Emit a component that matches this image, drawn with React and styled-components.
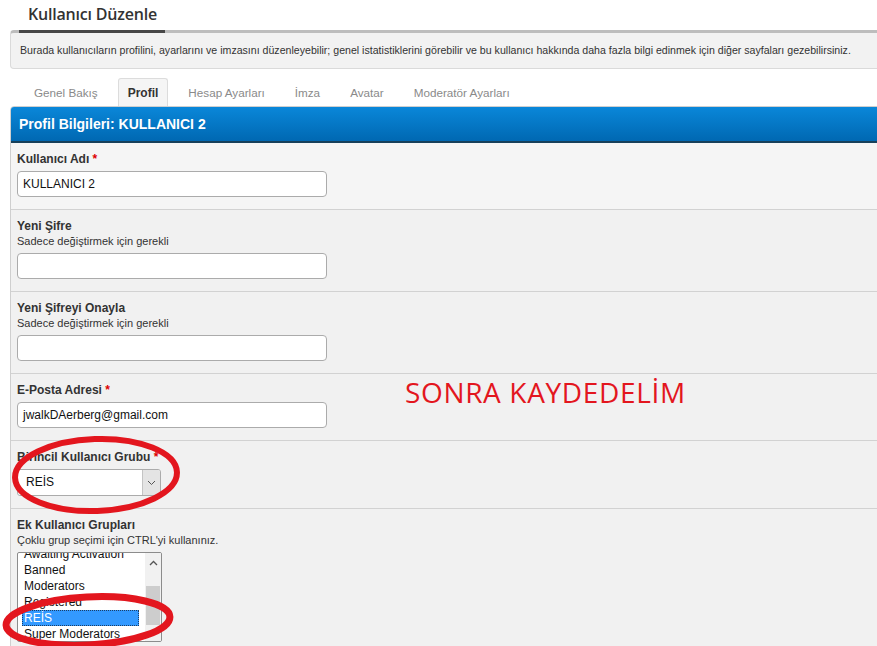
import React from 'react';
import styled, { createGlobalStyle } from 'styled-components';

const GlobalStyle = createGlobalStyle`
  body {
    margin: 0;
    background: #fff;
    font-family: "Liberation Sans", Arial, sans-serif;
    color: #333;
    overflow: hidden;
  }
`;

const Page = styled.div`
  position: relative;
  width: 877px;
  height: 646px;
  overflow: hidden;
`;

const Content = styled.div`
  width: 900px;
  padding-left: 10px;
`;

const Title = styled.h1`
  margin: 0;
  height: 30px;
  padding-left: 18px;
  font-family: "Open Sans", "Liberation Sans", sans-serif;
  font-weight: 600;
  font-size: 16px;
  letter-spacing: -0.2px;
  line-height: 28px;
  color: #333;
`;

const InfoBox = styled.div`
  position: relative;
  height: 35px;
  padding: 0 9px;
  background: #f2f2f2;
  border: 1px solid #dadada;
  border-top: 3px solid #bdbdbd;
  border-radius: 4px;
  font-size: 10.6px;
  line-height: 35px;
  white-space: nowrap;

  &::before {
    content: '';
    position: absolute;
    top: -3px;
    left: 8px;
    width: 146px;
    height: 3px;
    background: #474747;
  }
`;

const Tabs = styled.div`
  display: flex;
  gap: 10px;
  margin-top: 9px;
  padding-left: 14px;
`;

const Tab = styled.div`
  height: 27px;
  padding: 0 9px;
  border: 1px solid ${p => (p.$active ? '#dcdcdc' : 'transparent')};
  border-bottom: none;
  border-radius: 3px 3px 0 0;
  background: ${p => (p.$active ? '#f5f5f5' : 'transparent')};
  font-size: ${p => (p.$active ? '12px' : '11.7px')};
  font-weight: ${p => (p.$active ? 'bold' : 'normal')};
  color: ${p => (p.$active ? '#333' : '#8a8a8a')};
  line-height: 28px;
`;

const Panel = styled.div`
  border: 1px solid #cfcfcf;
  border-radius: 4px 0 0 0;
  background: #f4f4f4;
  overflow: hidden;
`;

const PanelHeader = styled.div`
  height: 34px;
  padding-left: 8px;
  background: linear-gradient(#0a87d9, #0068b2);
  border-bottom: 2px solid #17405a;
  color: #fff;
  font-weight: bold;
  font-size: 14px;
  line-height: 35px;
`;

const Row = styled.div`
  padding: 8px 6px 12px 6px;
  background: ${p => (p.$light ? '#f5f5f5' : '#f1f1f1')};
  & + & {
    border-top: 1px solid #d2d2d2;
  }
`;

const Label = styled.div`
  font-weight: bold;
  font-size: 12px;
  line-height: 16px;
  color: #333;
`;

const Required = styled.span`
  color: #d00;
`;

const Hint = styled.div`
  font-size: 11px;
  line-height: 15px;
  color: #333;
`;

const TextInput = styled.div`
  box-sizing: border-box;
  width: 310px;
  height: 26px;
  margin-top: 4px;
  padding: 0 5px;
  background: #fff;
  border: 1px solid #ababab;
  border-radius: 4px;
  font-size: 12px;
  line-height: 24px;
  color: #111;
`;

const Select = styled.div`
  box-sizing: border-box;
  display: flex;
  width: 144px;
  height: 27px;
  margin-top: 4px;
  background: #fff;
  border: 1px solid #ababab;
  border-radius: 3px;
  overflow: hidden;
`;

const SelectValue = styled.div`
  flex: 1;
  padding-left: 8px;
  font-size: 12px;
  line-height: 25px;
  color: #111;
`;

const SelectArrow = styled.div`
  display: flex;
  align-items: center;
  justify-content: center;
  width: 17px;
  background: #e4e4e4;
  border-left: 1px solid #c4c4c4;
`;

const ListBox = styled.div`
  box-sizing: border-box;
  display: flex;
  width: 145px;
  height: 90px;
  margin-top: 4px;
  background: #fff;
  border: 1px solid #8c8c8c;
  border-radius: 2px;
  overflow: hidden;
`;

const Options = styled.div`
  flex: 1;
  padding: 0 6px 0 4px;
  margin-top: -7px;
`;

const Option = styled.div`
  box-sizing: border-box;
  height: 16px;
  padding-left: 2px;
  font-size: 12px;
  line-height: 16px;
  white-space: nowrap;
  color: ${p => (p.$selected ? '#fff' : '#111')};
  background: ${p => (p.$selected ? '#3399ff' : 'transparent')};
  outline: ${p => (p.$selected ? '1px dotted #1a3d66' : 'none')};
  outline-offset: -1px;
`;

const ScrollBar = styled.div`
  display: flex;
  flex-direction: column;
  width: 16px;
  background: #f1f1f1;
`;

const ScrollButton = styled.div`
  display: flex;
  align-items: center;
  justify-content: center;
  height: 20px;
`;

const ScrollThumb = styled.div`
  height: 39px;
  margin: 13px 1px 0 1px;
  background: #cdcdcd;
`;

const Annotation = styled.div`
  position: absolute;
  left: 405px;
  top: 375px;
  font-family: "Open Sans", "Liberation Sans", sans-serif;
  font-size: 28px;
  line-height: 34px;
  color: #e3161e;
  letter-spacing: 0.65px;
`;

const Marks = styled.svg`
  position: absolute;
  left: 0;
  top: 0;
  pointer-events: none;
`;

const tabs = ['Genel Bakış', 'Profil', 'Hesap Ayarları', 'İmza', 'Avatar', 'Moderatör Ayarları'];
const groups = ['Awaiting Activation', 'Banned', 'Moderators', 'Registered', 'REİS', 'Super Moderators'];

export default function App() {
  return (
    <Page>
      <GlobalStyle />
      <Content>
        <Title>Kullanıcı Düzenle</Title>
        <InfoBox>
          Burada kullanıcıların profilini, ayarlarını ve imzasını düzenleyebilir; genel istatistiklerini görebilir ve bu kullanıcı hakkında daha fazla bilgi edinmek için diğer sayfaları gezebilirsiniz.
        </InfoBox>
        <Tabs>
          {tabs.map(t => (
            <Tab key={t} $active={t === 'Profil'}>{t}</Tab>
          ))}
        </Tabs>
        <Panel>
          <PanelHeader>Profil Bilgileri: KULLANICI 2</PanelHeader>
          <Row $light>
            <Label>Kullanıcı Adı <Required>*</Required></Label>
            <TextInput>KULLANICI 2</TextInput>
          </Row>
          <Row>
            <Label>Yeni Şifre</Label>
            <Hint>Sadece değiştirmek için gerekli</Hint>
            <TextInput />
          </Row>
          <Row>
            <Label>Yeni Şifreyi Onayla</Label>
            <Hint>Sadece değiştirmek için gerekli</Hint>
            <TextInput />
          </Row>
          <Row>
            <Label>E-Posta Adresi <Required>*</Required></Label>
            <TextInput>jwalkDAerberg@gmail.com</TextInput>
          </Row>
          <Row>
            <Label>Birincil Kullanıcı Grubu <Required>*</Required></Label>
            <Select>
              <SelectValue>REİS</SelectValue>
              <SelectArrow>
                <svg width="9" height="6" viewBox="0 0 9 6">
                  <polyline points="1,1 4.5,4.5 8,1" fill="none" stroke="#555" strokeWidth="1" />
                </svg>
              </SelectArrow>
            </Select>
          </Row>
          <Row>
            <Label>Ek Kullanıcı Grupları</Label>
            <Hint>Çoklu grup seçimi için CTRL'yi kullanınız.</Hint>
            <ListBox>
              <Options>
                {groups.map(g => (
                  <Option key={g} $selected={g === 'REİS'}>{g}</Option>
                ))}
              </Options>
              <ScrollBar>
                <ScrollButton>
                  <svg width="9" height="6" viewBox="0 0 9 6">
                    <polyline points="1,5 4.5,1.5 8,5" fill="none" stroke="#555" strokeWidth="1.3" />
                  </svg>
                </ScrollButton>
                <ScrollThumb />
              </ScrollBar>
            </ListBox>
          </Row>
        </Panel>
      </Content>
      <Annotation>SONRA KAYDEDELİM</Annotation>
      <Marks width="877" height="646">
        <ellipse cx="96" cy="475" rx="81" ry="36" fill="none" stroke="#e3161e" strokeWidth="6" transform="rotate(-2 96 475)" />
        <ellipse cx="88" cy="621" rx="82" ry="24" fill="none" stroke="#e3161e" strokeWidth="7" transform="rotate(-3 88 621)" />
      </Marks>
    </Page>
  );
}
